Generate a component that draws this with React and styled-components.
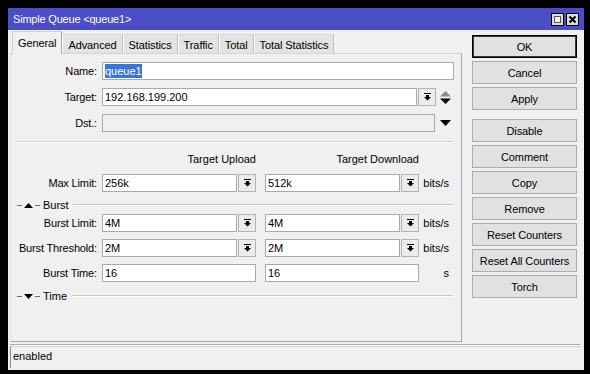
import React from "react";
import styled, { createGlobalStyle } from "styled-components";

const GlobalStyle = createGlobalStyle`
  html, body {
    margin: 0;
    padding: 0;
    background: #000;
  }
  body {
    font-family: "Liberation Sans", Arial, sans-serif;
    font-size: 11px;
    color: #000;
  }
`;

const Window = styled.div`
  margin: 8px 0 0 8px;
  width: 576px;
  height: 362px;
  background: #f0f0f0;
  display: flex;
  flex-direction: column;
`;

const TitleBar = styled.div`
  height: 22px;
  flex-shrink: 0;
  background: #4b4dc7;
  color: #fff;
  display: flex;
  align-items: center;
  justify-content: space-between;
  padding: 0 5px 0 5px;
`;

const TitleText = styled.span`
  font-size: 11px;
  letter-spacing: -0.2px;
`;

const TitleButtons = styled.div`
  display: flex;
  gap: 2px;
  margin-top: 1px;
`;

const Body = styled.div`
  display: flex;
  gap: 10px;
  padding: 1px 7px 0 2px;
`;

const LeftCol = styled.div`
  width: 452px;
  display: flex;
  flex-direction: column;
`;

const Tabs = styled.div`
  display: flex;
  align-items: flex-end;
  height: 22px;
  padding-left: 2px;
  letter-spacing: -0.1px;
`;

const Tab = styled.div`
  box-sizing: border-box;
  padding: 0 5px;
  display: flex;
  align-items: center;
  position: relative;
  height: ${p => (p.$active ? "23px" : "19px")};
  margin-bottom: ${p => (p.$active ? "-1px" : "0")};
  background: ${p => (p.$active ? "#f0f0f0" : "#e3e3e3")};
  border-top: 1px solid ${p => (p.$active ? "#d0d0d0" : "#d6d6d6")};
  border-left: 1px solid ${p => (p.$active ? "#d0d0d0" : "#fafafa")};
  border-right: 1px solid ${p => (p.$active ? "#a8a8a8" : "#c2c2c2")};
  z-index: ${p => (p.$active ? 2 : 1)};
  padding-top: ${p => (p.$active ? "0" : "1px")};
`;

const Panel = styled.div`
  box-sizing: border-box;
  height: 289px;
  border: 1px solid;
  border-color: #d4d4d4 #a8a8a8 #a8a8a8 #e6e6e6;
  display: flex;
  flex-direction: column;
  padding-top: 8px;
  position: relative;
  z-index: 1;
`;

const Row = styled.div`
  display: flex;
  align-items: center;
  height: ${p => p.$h || 18}px;
  margin-top: ${p => p.$mt || 0}px;
`;

const Label = styled.div`
  box-sizing: border-box;
  width: 91px;
  padding-right: 5px;
  text-align: right;
  white-space: nowrap;
  letter-spacing: -0.15px;
`;

const Field = styled.div`
  box-sizing: border-box;
  width: ${p => p.$w}px;
  height: 18px;
  border: 1px solid #a9a9a9;
  background: ${p => (p.$disabled ? "#f0f0f0" : "#fff")};
  padding: 0 2px;
  display: flex;
  align-items: center;
  white-space: nowrap;
  overflow: hidden;
`;

const Selected = styled.span`
  background: #3875d7;
  color: #fff;
  padding: 1px 0;
`;

const DropBtn = styled.div`
  box-sizing: border-box;
  width: 18px;
  height: 18px;
  margin-left: 1px;
  border: 1px solid #b4b4b4;
  background: #ececec;
  display: flex;
  align-items: center;
  justify-content: center;
`;

const Gap = styled.div`
  width: ${p => p.$w}px;
  flex-shrink: 0;
`;

const Unit = styled.div`
  width: 30px;
  text-align: right;
`;

const Head = styled.div`
  width: 154px;
  text-align: right;
  white-space: nowrap;
`;

const Separator = styled.div`
  margin: 9px 0 0 5px;
  width: 437px;
  border-top: 1px solid #d2d2d2;
  border-bottom: 1px solid #fff;
`;

const Section = styled.div`
  display: flex;
  align-items: center;
  height: 14px;
  margin-top: ${p => p.$mt}px;
`;

const SectionLead = styled.div`
  box-sizing: border-box;
  width: 61px;
  padding-left: 6px;
  display: flex;
  align-items: center;
`;

const Dash = styled.span`
  display: inline-block;
  width: 5px;
  height: 1px;
  background: #6e6e6e;
  margin-right: ${p => p.$mr}px;
`;

const SectionLine = styled.div`
  width: 381px;
  border-top: 1px solid #c9c9c9;
  border-bottom: 1px solid #fff;
`;

const RightCol = styled.div`
  width: 105px;
  padding-top: 4px;
  display: flex;
  flex-direction: column;
  gap: 3px;
`;

const Button = styled.div`
  box-sizing: border-box;
  height: 23px;
  margin-top: ${p => p.$mt || 0}px;
  display: flex;
  align-items: center;
  justify-content: center;
  background: #e1e1e1;
  border: 1px solid ${p => (p.$default ? "#000" : "#adadad")};
  box-shadow: ${p => (p.$default ? "inset 0 0 0 1px #3a3a3a" : "none")};
  letter-spacing: -0.1px;
`;

const StatusSep = styled.div`
  margin: 2px 4px 0 2px;
  border-top: 1px solid #a8a8a8;
  border-bottom: 1px solid #fff;
`;

const StatusBox = styled.div`
  box-sizing: border-box;
  height: 22px;
  margin: 0 4px 0 2px;
  border-left: 1px solid #8a8a8a;
  border-top: 1px solid #d0d0d0;
  padding: 0 0 3px 2px;
  display: flex;
  align-items: center;
`;

const DropIcon = () => (
  <svg width="7" height="8" viewBox="0 0 7 8">
    <rect x="0" y="0" width="7" height="1" fill="#000" />
    <rect x="2" y="2" width="3" height="2" fill="#000" />
    <polygon points="0,4 7,4 3.5,7.5" fill="#000" />
  </svg>
);

const UpDown = () => (
  <svg width="11" height="13" viewBox="0 0 11 13" style={{ marginLeft: 4 }}>
    <polygon points="0,5.5 11,5.5 5.5,0" fill="#8c8c8c" />
    <polygon points="0,7.5 11,7.5 5.5,13" fill="#000" />
  </svg>
);

const DownTri = ({ ml }) => (
  <svg width="11" height="6" viewBox="0 0 11 6" style={{ marginLeft: ml }}>
    <polygon points="0,0 11,0 5.5,6" fill="#000" />
  </svg>
);

const SmallTri = ({ up }) => (
  <svg width="9" height="5" viewBox="0 0 9 5" style={{ marginRight: 2 }}>
    <polygon points={up ? "0,5 9,5 4.5,0" : "0,0 9,0 4.5,5"} fill="#000" />
  </svg>
);

const MaxIcon = () => (
  <svg width="13" height="13" viewBox="0 0 13 13">
    <rect x="0.5" y="0.5" width="12" height="12" fill="#dcdcdc" stroke="#000" />
    <rect x="3.5" y="3.5" width="6" height="6" fill="#f4f4f4" stroke="#555" />
  </svg>
);

const CloseIcon = () => (
  <svg width="13" height="13" viewBox="0 0 13 13">
    <rect x="0.5" y="0.5" width="12" height="12" fill="#dcdcdc" stroke="#000" />
    <path d="M3.5 3.5 L9.5 9.5 M9.5 3.5 L3.5 9.5" stroke="#000" strokeWidth="2" />
  </svg>
);

const SectionHead = ({ title, up, mt }) => (
  <Section $mt={mt}>
    <SectionLead>
      <Dash $mr={2} />
      <SmallTri up={up} />
      <Dash $mr={3} />
      <span>{title}</span>
    </SectionLead>
    <SectionLine />
  </Section>
);

const PairRow = ({ label, a, b, mt }) => (
  <Row $mt={mt}>
    <Label>{label}</Label>
    <Field $w={135}>{a}</Field>
    <DropBtn><DropIcon /></DropBtn>
    <Gap $w={9} />
    <Field $w={135}>{b}</Field>
    <DropBtn><DropIcon /></DropBtn>
    <Unit>bits/s</Unit>
  </Row>
);

const tabs = ["General", "Advanced", "Statistics", "Traffic", "Total", "Total Statistics"];

const buttons = [
  { label: "OK", def: true },
  { label: "Cancel" },
  { label: "Apply" },
  { label: "Disable", mt: 6 },
  { label: "Comment" },
  { label: "Copy" },
  { label: "Remove" },
  { label: "Reset Counters" },
  { label: "Reset All Counters" },
  { label: "Torch" },
];

export default function App() {
  return (
    <>
      <GlobalStyle />
      <Window>
        <TitleBar>
          <TitleText>Simple Queue &lt;queue1&gt;</TitleText>
          <TitleButtons>
            <MaxIcon />
            <CloseIcon />
          </TitleButtons>
        </TitleBar>
        <Body>
          <LeftCol>
            <Tabs>
              {tabs.map((t, i) => (
                <Tab key={t} $active={i === 0}>{t}</Tab>
              ))}
            </Tabs>
            <Panel>
              <Row>
                <Label>Name:</Label>
                <Field $w={352}><Selected>queue1</Selected></Field>
              </Row>
              <Row $mt={8}>
                <Label>Target:</Label>
                <Field $w={315}>192.168.199.200</Field>
                <DropBtn><DropIcon /></DropBtn>
                <UpDown />
              </Row>
              <Row $mt={8}>
                <Label>Dst.:</Label>
                <Field $w={333} $disabled />
                <DownTri ml={5} />
              </Row>
              <Separator />
              <Row $mt={9} $h={13}>
                <Label />
                <Head>Target Upload</Head>
                <Gap $w={9} />
                <Head>Target Download</Head>
              </Row>
              <PairRow mt={9} label="Max Limit:" a="256k" b="512k" />
              <SectionHead title="Burst" up mt={6} />
              <PairRow mt={2} label="Burst Limit:" a="4M" b="4M" />
              <PairRow mt={7} label="Burst Threshold:" a="2M" b="2M" />
              <Row $mt={7}>
                <Label>Burst Time:</Label>
                <Field $w={154}>16</Field>
                <Gap $w={9} />
                <Field $w={154}>16</Field>
                <Unit>s</Unit>
              </Row>
              <SectionHead title="Time" mt={7} />
            </Panel>
          </LeftCol>
          <RightCol>
            {buttons.map(b => (
              <Button key={b.label} $default={b.def} $mt={b.mt}>{b.label}</Button>
            ))}
          </RightCol>
        </Body>
        <StatusSep />
        <StatusBox>enabled</StatusBox>
      </Window>
    </>
  );
}
